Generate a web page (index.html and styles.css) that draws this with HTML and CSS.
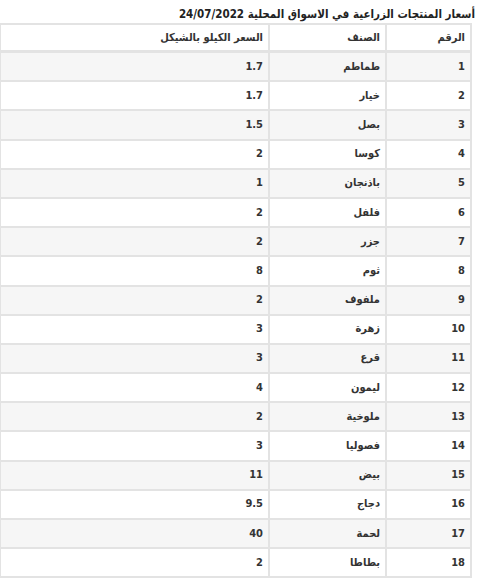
FILE: index.html
```html
<!DOCTYPE html>
<html lang="ar" dir="rtl">
<head>
<meta charset="utf-8">
<title>أسعار المنتجات الزراعية</title>
<link rel="stylesheet" href="styles.css">
</head>
<body>
<div class="page">
  <h3 class="title">أسعار المنتجات الزراعية في الاسواق المحلية 24/07/2022</h3>
  <table class="prices">
    <colgroup>
      <col class="c-num">
      <col class="c-name">
      <col class="c-price">
    </colgroup>
    <thead>
      <tr><th>الرقم</th><th>الصنف</th><th>السعر الكيلو بالشيكل</th></tr>
    </thead>
    <tbody>
      <tr><td>1</td><td>طماطم</td><td>1.7</td></tr>
      <tr><td>2</td><td>خيار</td><td>1.7</td></tr>
      <tr><td>3</td><td>بصل</td><td>1.5</td></tr>
      <tr><td>4</td><td>كوسا</td><td>2</td></tr>
      <tr><td>5</td><td>باذنجان</td><td>1</td></tr>
      <tr><td>6</td><td>فلفل</td><td>2</td></tr>
      <tr><td>7</td><td>جزر</td><td>2</td></tr>
      <tr><td>8</td><td>ثوم</td><td>8</td></tr>
      <tr><td>9</td><td>ملفوف</td><td>2</td></tr>
      <tr><td>10</td><td>زهرة</td><td>3</td></tr>
      <tr><td>11</td><td>قرع</td><td>3</td></tr>
      <tr><td>12</td><td>ليمون</td><td>4</td></tr>
      <tr><td>13</td><td>ملوخية</td><td>2</td></tr>
      <tr><td>14</td><td>فصوليا</td><td>3</td></tr>
      <tr><td>15</td><td>بيض</td><td>11</td></tr>
      <tr><td>16</td><td>دجاج</td><td>9.5</td></tr>
      <tr><td>17</td><td>لحمة</td><td>40</td></tr>
      <tr><td>18</td><td>بطاطا</td><td>2</td></tr>
    </tbody>
  </table>
</div>
</body>
</html>
```
FILE: styles.css
```css
html, body {
  margin: 0;
  padding: 0;
  background: #ffffff;
}
.page {
  width: 478px;
  color: #333333;
  font-family: "DejaVu Sans Condensed", "DejaVu Sans", sans-serif;
}
.title {
  margin: 0;
  padding: 5px 3px 0 0;
  height: 18px;
  font-size: 11.5px;
  font-weight: bold;
  line-height: 18px;
  color: #222222;
  text-align: right;
}
.prices {
  border-collapse: collapse;
  width: 471px;
  margin: 0 6px 0 0;
  table-layout: fixed;
  font-size: 11px;
}
.c-num { width: 85px; }
.c-name { width: 117px; }
.c-price { width: 269px; }
.prices th,
.prices td {
  border: 2px solid #e3e3e3;
  padding: 0 5px;
  height: 27.2px;
  text-align: right;
  font-weight: bold;
  line-height: 14px;
  vertical-align: middle;
}
.prices thead th {
  height: 25px;
  border-bottom-width: 3px;
}
.prices tbody tr:nth-child(odd) td {
  background: #f6f6f6;
}
```
